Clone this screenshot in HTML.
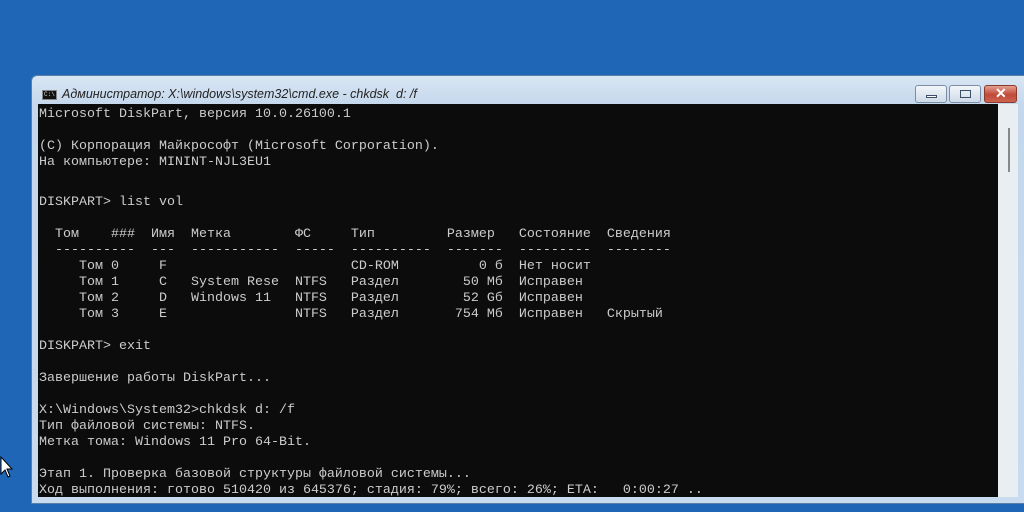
<!DOCTYPE html>
<html><head><meta charset="utf-8"><style>
body{margin:0;width:1024px;height:512px;overflow:hidden;background:#1f66b6;position:relative;font-family:"Liberation Sans",sans-serif}
.win{position:absolute;left:31px;top:75px;width:1000px;height:429px;background:linear-gradient(#d9e6f3,#c4d7ec 30px,#c9dbee);border:1px solid #5a7fa8;border-radius:6px 6px 0 0;box-sizing:border-box}
.title{position:absolute;left:30px;top:11px;font-size:12.5px;font-style:italic;color:#222}
.ico{position:absolute;left:10px;top:14px;width:15px;height:10px;background:#111;border:1px solid #888;box-sizing:border-box;color:#ddd;font-size:6px;line-height:8px;font-family:"Liberation Mono",monospace;padding-left:1px}
.con{position:absolute;left:38px;top:104px;width:960px;height:393px;background:#0c0c0c;overflow:hidden}
.sb{position:absolute;left:998px;top:104px;width:20px;height:393px;background:#e9eef3}
.th{position:absolute;left:1008px;top:128px;width:2px;height:44px;background:#888}
pre{margin:0;position:absolute;left:1px;font-family:"Liberation Mono",monospace;font-size:13.33px;line-height:16px;color:#cccccc}
.b{position:absolute;top:9px;height:18px;width:32px;border:1px solid #7c8ea5;border-radius:3px;background:linear-gradient(#f2f6fa,#cfdbe8);box-sizing:border-box}
.x{background:linear-gradient(#e3a090,#c04a38 55%,#cc6450);border-color:#8b3a2e}
</style></head><body>
<div class="win">
<div class="ico">C:\</div>
<div class="title">Администратор: X:\windows\system32\cmd.exe - chkdsk&nbsp; d: /f</div>
<div class="b" style="left:883px"><div style="position:absolute;left:10px;top:9px;width:11px;height:3px;border:1px solid #3c4f66;background:#fff;box-sizing:border-box"></div></div>
<div class="b" style="left:917px"><div style="position:absolute;left:10px;top:4px;width:11px;height:8px;border:1px solid #3c4f66;box-sizing:border-box"></div></div>
<div class="b x" style="left:952px;width:33px"><div style="position:absolute;left:10px;top:-1px;color:#fff;font-weight:bold;font-size:14px">✕</div></div>
</div>
<div class="con">
<pre style="top:3px">Microsoft DiskPart, версия 10.0.26100.1

(C) Корпорация Майкрософт (Microsoft Corporation).
На компьютере: MININT-NJL3EU1</pre>
<pre style="top:91px">DISKPART&gt; list vol

  Том    ###  Имя  Метка        ФС     Тип         Размер   Состояние  Сведения
  ----------  ---  -----------  -----  ----------  -------  ---------  --------
     Том 0     F                       CD-ROM          0 б  Нет носит
     Том 1     C   System Rese  NTFS   Раздел        50 Мб  Исправен
     Том 2     D   Windows 11   NTFS   Раздел        52 Gб  Исправен
     Том 3     E                NTFS   Раздел       754 Мб  Исправен   Скрытый

DISKPART&gt; exit

Завершение работы DiskPart...

X:\Windows\System32&gt;chkdsk d: /f
Тип файловой системы: NTFS.
Метка тома: Windows 11 Pro 64-Bit.

Этап 1. Проверка базовой структуры файловой системы...
Ход выполнения: готово 510420 из 645376; стадия: 79%; всего: 26%; ETA:   0:00:27 ..</pre>
</div>
<div class="sb"></div><div class="th"></div>
<svg style="position:absolute;left:0;top:456px" width="14" height="24"><path d="M1 1 L1 18 L5 14 L8 21 L10 20 L7 13 L12 13 Z" fill="#fff" stroke="#000" stroke-width="1"/></svg>
</body></html>
